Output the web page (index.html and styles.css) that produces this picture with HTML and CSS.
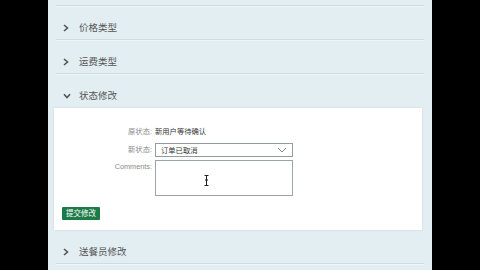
FILE: index.html
```html
<!DOCTYPE html>
<html lang="zh">
<head>
<meta charset="utf-8">
<link rel="stylesheet" href="styles.css">
</head>
<body>
<div class="page">
  <div class="acc">
    <div class="row first"><span class="chev"><svg width="6" height="8" viewBox="0 0 6 8"><path d="M1 1 L4.5 4 L1 7" fill="none" stroke="#555" stroke-width="1.6"/></svg></span><span class="title">订单详情</span></div>
    <div class="row"><span class="chev"><svg width="6" height="8" viewBox="0 0 6 8"><path d="M1 1 L4.5 4 L1 7" fill="none" stroke="#555" stroke-width="1.6"/></svg></span><span class="title">价格类型</span></div>
    <div class="row"><span class="chev"><svg width="6" height="8" viewBox="0 0 6 8"><path d="M1 1 L4.5 4 L1 7" fill="none" stroke="#555" stroke-width="1.6"/></svg></span><span class="title">运费类型</span></div>
    <div class="row open"><span class="chev"><svg width="8" height="6" viewBox="0 0 8 6"><path d="M1 1.2 L4 4.5 L7 1.2" fill="none" stroke="#555" stroke-width="1.6"/></svg></span><span class="title">状态修改</span></div>
    <div class="panel">
      <div class="frow r1">
        <span class="label">原状态:</span>
        <span class="value">新用户等待确认</span>
      </div>
      <div class="frow r2">
        <span class="label">新状态:</span>
        <div class="select"><span>订单已取消</span><svg width="10" height="6" viewBox="0 0 10 6"><path d="M1 1 L5 5 L9 1" fill="none" stroke="#8a8f94" stroke-width="1"/></svg></div>
      </div>
      <div class="frow r3">
        <span class="label top">Comments:</span>
        <div class="textarea"><svg class="cursor" width="5" height="11" viewBox="0 0 5 11"><path d="M0.5 0.5 H4.5 M2.5 0.5 V10.5 M0.5 10.5 H4.5 M1 5 H4" fill="none" stroke="#222" stroke-width="1"/></svg></div>
      </div>
      <div class="btn">提交修改</div>
    </div>
    <div class="row"><span class="chev"><svg width="6" height="8" viewBox="0 0 6 8"><path d="M1 1 L4.5 4 L1 7" fill="none" stroke="#555" stroke-width="1.6"/></svg></span><span class="title">送餐员修改</span></div>
  </div>
</div>
</body>
</html>
```

FILE: styles.css
```css
html, body {
  margin: 0;
  padding: 0;
  background: #000;
  width: 480px;
  height: 270px;
  overflow: hidden;
  font-family: "Liberation Sans", "Noto Sans CJK SC", sans-serif;
}
.page {
  margin: 0 48px;
  width: 384px;
  height: 270px;
  background: #e2eef2;
  overflow: hidden;
}
.acc {
  padding: 0 8px;
  display: flex;
  flex-direction: column;
}
.row {
  box-sizing: border-box;
  height: 32px;
  padding: 8px 0 0 7px;
  display: flex;
  align-items: center;
  border-bottom: 1px solid #cddde3;
  box-shadow: 0 1px 0 #eef6f8;
  margin-bottom: 2px;
}
.row.first {
  margin-top: -26px;
}
.row.open {
  border-bottom: none;
  box-shadow: none;
  margin-bottom: 0;
}
.chev {
  width: 8px;
  display: flex;
  align-items: center;
  margin-right: 8px;
}
.title {
  font-size: 9.5px;
  color: #555;
  line-height: 12px;
}
.panel {
  background: #fff;
  margin: 0 2px 2px -2px;
  padding: 19px 8px 10px;
  box-shadow: 0 0 2px rgba(180, 205, 215, 0.6);
  display: flex;
  flex-direction: column;
}
.frow {
  display: flex;
  align-items: center;
  gap: 3px;
}
.frow.r1 {
  height: 10px;
  margin-bottom: 6px;
}
.frow.r2 {
  margin-bottom: 3px;
}
.frow.r3 {
  align-items: flex-start;
}
.label {
  width: 90px;
  text-align: right;
  font-size: 7.3px;
  color: #8a8a8a;
  line-height: 10px;
}
.label.top {
  margin-top: 2px;
}
.value {
  font-size: 7.3px;
  color: #333;
  line-height: 10px;
}
.select {
  box-sizing: border-box;
  width: 138px;
  height: 14px;
  border: 1px solid #8f9aa2;
  display: flex;
  align-items: center;
  justify-content: space-between;
  padding: 0 5px 0 5px;
  font-size: 7.3px;
  color: #333;
}
.textarea {
  box-sizing: border-box;
  width: 138px;
  height: 36px;
  border: 1px solid #9aa4ab;
  position: relative;
}
.cursor {
  position: absolute;
  left: 48px;
  top: 14px;
}
.btn {
  align-self: flex-start;
  margin-top: 11px;
  background: #1b7a45;
  color: #fff;
  font-size: 7.5px;
  line-height: 13px;
  height: 13px;
  padding: 0 4px;
  border-radius: 1px;
}
```
